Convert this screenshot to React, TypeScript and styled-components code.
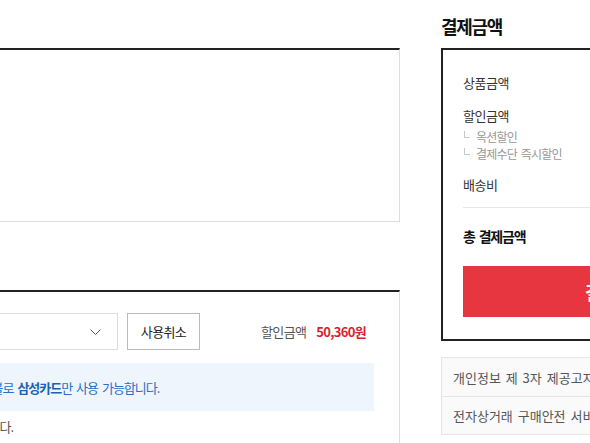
import styled, { createGlobalStyle } from 'styled-components';

const GlobalStyle = createGlobalStyle`
  html, body {
    margin: 0;
    padding: 0;
    background: #fff;
    overflow: hidden;
  }
  body {
    font-family: 'Noto Sans CJK KR', 'Noto Sans', sans-serif;
    color: #222;
  }
  * {
    box-sizing: border-box;
  }
`;

const Page = styled.div`
  display: flex;
  align-items: flex-start;
  width: 590px;
  height: 443px;
  overflow: hidden;
  padding-top: 13px;
`;

const LeftColumn = styled.div`
  flex: 0 0 550px;
  margin-left: -150px;
`;

const RightColumn = styled.div`
  flex: 0 0 350px;
  margin-left: 41px;
`;

const SectionTitle = styled.h2<{ top?: number }>`
  margin: ${({ top }) => top ?? 0}px 0 9px;
  padding-left: 25px;
  font-size: 18px;
  line-height: 26px;
  font-weight: 700;
  letter-spacing: -1.3px;
  color: #111;
`;

const OrderTitle = styled(SectionTitle)`
  padding-left: 0;
`;

const MemoBox = styled.div`
  height: 174px;
  border: 1px solid #ddd;
  border-top: 2px solid #222;
`;

const CouponBody = styled.div`
  border: 1px solid #ddd;
  border-top: 2px solid #222;
  border-bottom: none;
  padding: 21px 25px 30px;
`;

const CouponRow = styled.div`
  display: flex;
  align-items: center;
  height: 37px;
`;

const SelectBox = styled.div`
  display: flex;
  align-items: center;
  justify-content: space-between;
  width: 242px;
  height: 37px;
  padding: 0 16px 0 12px;
  border: 1px solid #ddd;
  font-size: 13px;
  color: #333;
  letter-spacing: -0.6px;
`;

const CancelButton = styled.button`
  width: 73px;
  height: 37px;
  margin-left: 9px;
  border: 1px solid #bbb;
  background: #fff;
  font-family: inherit;
  font-size: 13px;
  letter-spacing: -0.6px;
  color: #222;
  padding: 0;
`;

const DiscountInfo = styled.div`
  margin-left: auto;
  padding-right: 8px;
  display: flex;
  align-items: baseline;
  gap: 10px;
`;

const DiscountLabel = styled.span`
  font-size: 13px;
  letter-spacing: -0.6px;
  color: #555;
`;

const DiscountValue = styled.span`
  font-size: 13px;
  font-weight: 700;
  letter-spacing: -0.7px;
  color: #d71f2c;
`;

const InfoBox = styled.div`
  display: flex;
  align-items: center;
  height: 48px;
  margin-top: 13px;
  padding: 0 18px 0 31px;
  background: #eff5fc;
  font-size: 13px;
  letter-spacing: -1px;
  word-spacing: 2px;
  color: #2a6fc4;
  white-space: nowrap;

  strong {
    color: #1a62b4;
    font-weight: 700;
  }
`;

const Note = styled.p`
  margin: 6px 0 0;
  padding-left: 28px;
  font-size: 13px;
  line-height: 20px;
  letter-spacing: -1px;
  word-spacing: 2px;
  color: #555;
  white-space: nowrap;
`;

const SummaryBox = styled.div`
  border: 2px solid #222;
  padding: 23px 20px 22px;
`;

const SummaryRow = styled.div<{ gap?: number }>`
  display: flex;
  justify-content: space-between;
  margin-top: ${({ gap }) => gap ?? 0}px;
  font-size: 13px;
  line-height: 20px;
  letter-spacing: -0.5px;
  color: #333;
`;

const SubList = styled.ul`
  list-style: none;
  margin: 2px 0 0;
  padding: 0;
`;

const SubItem = styled.li`
  display: flex;
  align-items: center;
  justify-content: space-between;
  font-size: 12px;
  line-height: 17px;
  letter-spacing: -0.8px;
  word-spacing: 2px;
  color: #999;
`;

const SubName = styled.span`
  display: flex;
  align-items: center;

  &::before {
    content: '';
    display: block;
    width: 5px;
    height: 6px;
    margin: -4px 6px 0 1px;
    border-left: 1px solid #c8c8c8;
    border-bottom: 1px solid #c8c8c8;
  }
`;

const Divider = styled.hr`
  margin: 12px 0 0;
  border: none;
  border-top: 1px solid #e6e6e6;
`;

const TotalRow = styled.div`
  display: flex;
  justify-content: space-between;
  margin-top: 17px;
  font-size: 14px;
  line-height: 22px;
  font-weight: 700;
  letter-spacing: -1.2px;
  word-spacing: 2px;
  color: #111;
`;

const PayButton = styled.button`
  display: block;
  width: 100%;
  height: 51px;
  margin-top: 19px;
  border: none;
  background: #e83641;
  color: #fff;
  font-family: inherit;
  font-size: 18px;
  font-weight: 700;
  letter-spacing: -1px;
`;

const InfoList = styled.ul`
  list-style: none;
  margin: 16px 0 0;
  padding: 0;
  border: 1px solid #e5e5e5;
  background: #fafafa;
`;

const InfoItem = styled.li`
  display: flex;
  align-items: center;
  height: 38px;
  padding-left: 11px;
  font-size: 13px;
  letter-spacing: 0;
  word-spacing: 2px;
  color: #555;
  white-space: nowrap;

  & + & {
    border-top: 1px solid #e5e5e5;
  }
`;

const Chevron = () => (
  <svg width='11' height='6' viewBox='0 0 11 6' fill='none'>
    <path d='M0.5 0.5l5 5 5-5' stroke='#555' strokeWidth='1' />
  </svg>
);

export default function App() {
  return (
    <>
      <GlobalStyle />
      <Page>
        <LeftColumn>
          <SectionTitle>배송메모</SectionTitle>
          <MemoBox />
          <SectionTitle top={33}>할인쿠폰</SectionTitle>
          <CouponBody>
            <CouponRow>
              <SelectBox>
                <span>할인쿠폰 적용</span>
                <Chevron />
              </SelectBox>
              <CancelButton>사용취소</CancelButton>
              <DiscountInfo>
                <DiscountLabel>할인금액</DiscountLabel>
                <DiscountValue>50,360원</DiscountValue>
              </DiscountInfo>
            </CouponRow>
            <InfoBox>
              <span>
                카드 결제는 일시불로 <strong>삼성카드</strong>만 사용 가능합니다.
              </span>
            </InfoBox>
            <Note>중복 사용 불가합니다.</Note>
          </CouponBody>
        </LeftColumn>

        <RightColumn>
          <OrderTitle>결제금액</OrderTitle>
          <SummaryBox>
            <SummaryRow>
              <span>상품금액</span>
              <span>112,000원</span>
            </SummaryRow>
            <SummaryRow gap={13}>
              <span>할인금액</span>
              <span>-50,360원</span>
            </SummaryRow>
            <SubList>
              <SubItem>
                <SubName>옥션할인</SubName>
                <span>0원</span>
              </SubItem>
              <SubItem>
                <SubName>결제수단 즉시할인</SubName>
                <span>-50,360원</span>
              </SubItem>
            </SubList>
            <SummaryRow gap={13}>
              <span>배송비</span>
              <span>무료</span>
            </SummaryRow>
            <Divider />
            <TotalRow>
              <span>총 결제금액</span>
              <span>61,640원</span>
            </TotalRow>
            <PayButton>결제하기</PayButton>
          </SummaryBox>
          <InfoList>
            <InfoItem>개인정보 제 3자 제공고지</InfoItem>
            <InfoItem>전자상거래 구매안전 서비스 안내</InfoItem>
          </InfoList>
        </RightColumn>
      </Page>
    </>
  );
}
